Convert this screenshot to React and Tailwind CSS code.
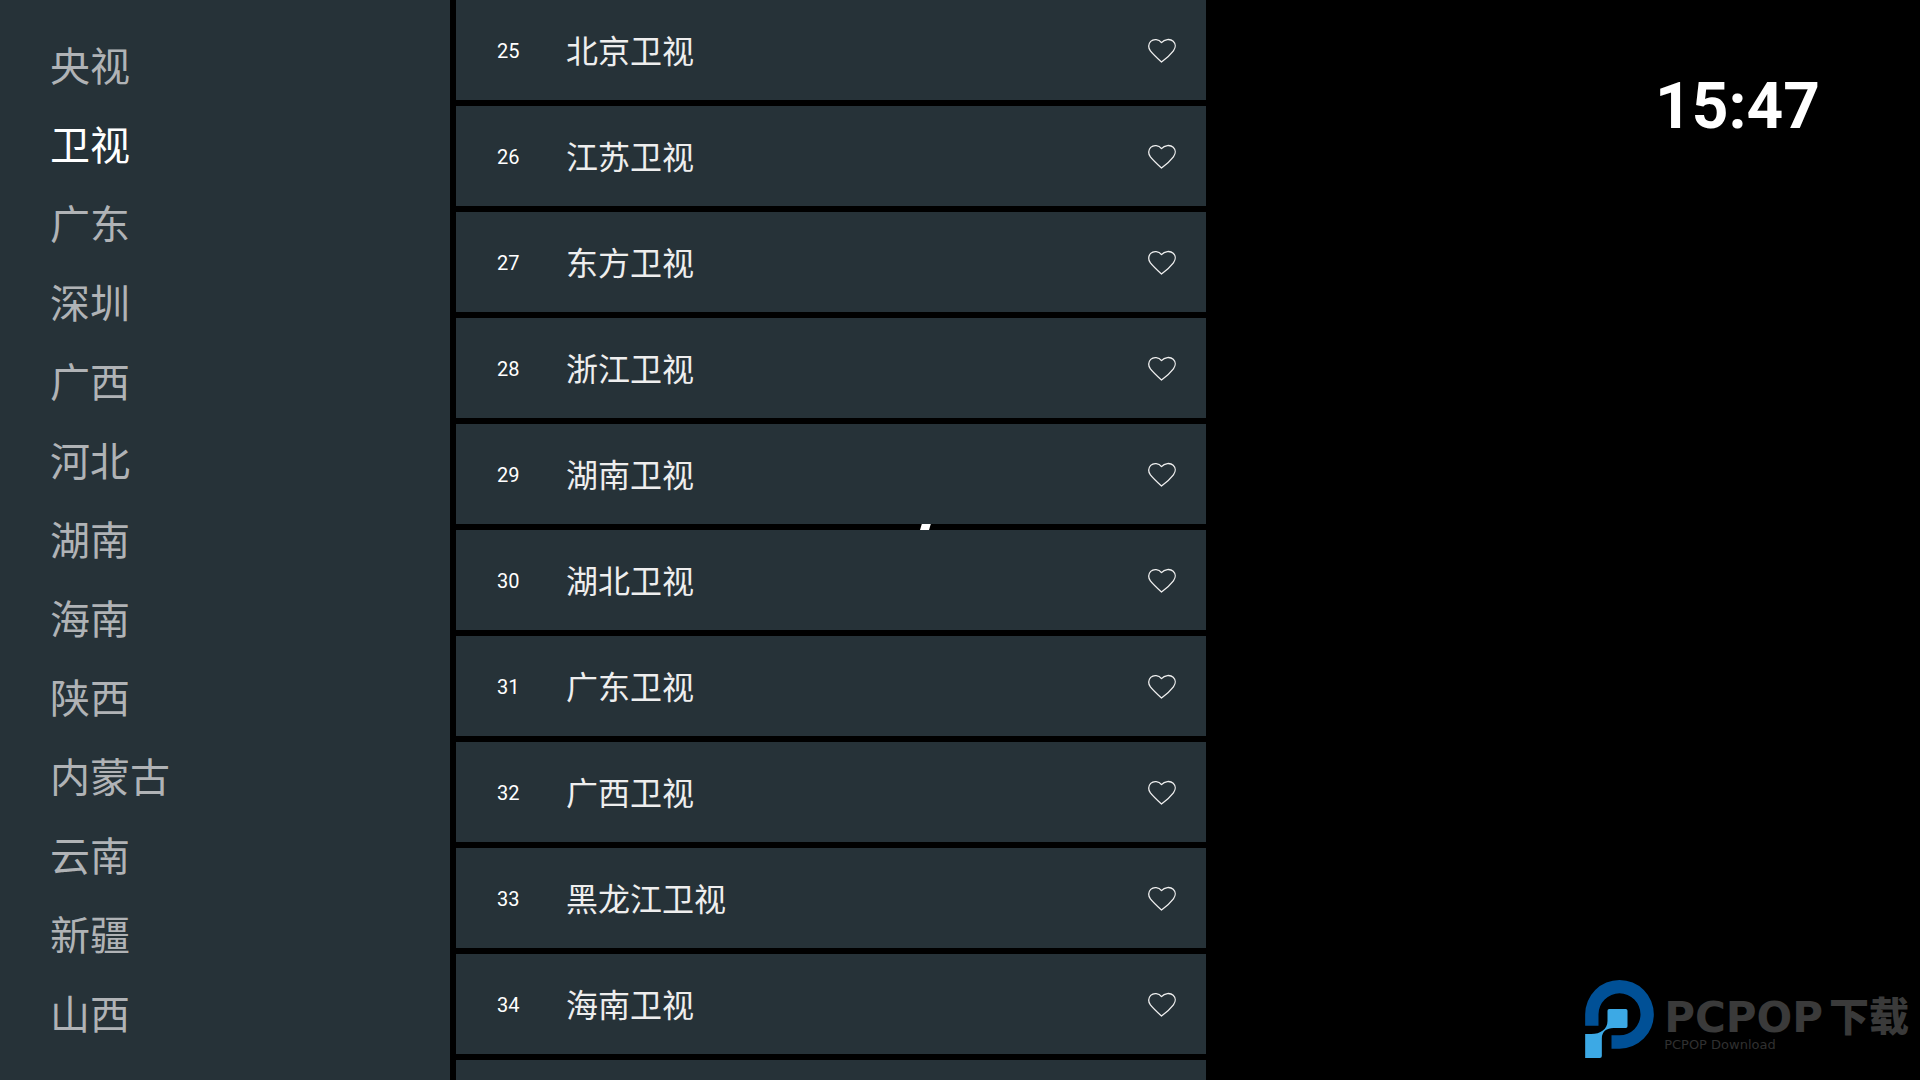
import { useState } from "react";

const groups = [
  "央视",
  "卫视",
  "广东",
  "深圳",
  "广西",
  "河北",
  "湖南",
  "海南",
  "陕西",
  "内蒙古",
  "云南",
  "新疆",
  "山西",
];

const channels = [
  { id: 25, name: "北京卫视" },
  { id: 26, name: "江苏卫视" },
  { id: 27, name: "东方卫视" },
  { id: 28, name: "浙江卫视" },
  { id: 29, name: "湖南卫视" },
  { id: 30, name: "湖北卫视" },
  { id: 31, name: "广东卫视" },
  { id: 32, name: "广西卫视" },
  { id: 33, name: "黑龙江卫视" },
  { id: 34, name: "海南卫视" },
];

const HeartIcon = ({ filled }) => (
  <svg width="28" height="25" viewBox="0 0 28 25" fill={filled ? "#f0f0f0" : "none"} stroke="#f0f0f0" strokeWidth="1.3" strokeLinejoin="round">
    <path d="M13.5 4.6C10.8 1 5.6 .6 2.7 3.4C-.1 6.2 .3 10.2 2.4 12.8C5.4 16.5 9.8 20.6 13.5 24C17.6 21 22.6 16.5 25.4 12.8C27.7 9.8 28 5.8 25.2 3.2C22.2 .6 16.6 1 13.5 4.6Z" />
  </svg>
);

const GroupList = ({ active, onSelect }) => (
  <nav className="w-[450px] shrink-0 bg-[#263238] pt-7">
    <ul>
      {groups.map((group) => (
        <li key={group}>
          <button
            type="button"
            className={`flex h-[79px] w-full items-center pl-[50px] text-[40px] leading-none ${group === active ? "text-white" : "text-[#b0b3b6]"}`}
            onClick={() => onSelect(group)}
          >
            {group}
          </button>
        </li>
      ))}
    </ul>
  </nav>
);

const ChannelRow = ({ channel, liked, onLike }) => (
  <li className="flex h-[100px] shrink-0 items-center bg-[#263238] pr-[30px]">
    <button type="button" className="flex h-full flex-1 items-center text-left">
      <span className="w-[110px] pt-px pl-[41px] text-xl text-white">{channel.id}</span>
      <span className="pt-1 text-[32px] leading-none text-[#eeeeee]">{channel.name}</span>
    </button>
    <button type="button" aria-label="收藏" aria-pressed={liked} onClick={() => onLike(channel.id)}>
      <HeartIcon filled={liked} />
    </button>
  </li>
);

const Brand = () => (
  <div className="flex items-start gap-[10px]">
    <svg width="69" height="78" viewBox="78 60 206 234">
      <path fill="#005096" d="M78 197V163A103 103 0 1 1 181 266H157V226H181A63 63 0 1 0 118 163V197Z" />
      <path
        fill="#3ca9e5"
        d="M150 147H200Q205 147 205 152V199Q205 204 200 204H163C143 204 128 214 128 236V288Q128 294 122 294H78V222H96C124 222 145 208 145 183V152Q145 147 150 147Z"
      />
    </svg>
    <div className="pt-5">
      <div className="flex items-center gap-[6px] text-[#3a3a3a]">
        <span className="font-['DejaVu_Sans'] text-[42px] leading-9 font-bold">PCPOP</span>
        <span className="text-[40px] leading-9 font-black">下载</span>
      </div>
      <p className="pt-px font-['DejaVu_Sans'] text-[13px] leading-4 text-[#303030]">PCPOP Download</p>
    </div>
  </div>
);

export default function App() {
  const [activeGroup, setActiveGroup] = useState("卫视");
  const [likes, setLikes] = useState([]);

  const toggleLike = (id) => {
    setLikes((prev) => (prev.includes(id) ? prev.filter((item) => item !== id) : [...prev, id]));
  };

  return (
    <main className="relative isolate flex h-screen gap-[6px] overflow-hidden bg-black font-[Roboto,'Noto_Sans_CJK_SC',sans-serif]">
      {/* Player spinner, visible only between the rows */}
      <svg className="absolute top-[524px] left-[920px] -z-10" width="11" height="6" viewBox="0 0 11 6">
        <path fill="#ffffff" d="M1.8 0H10.8L9 6H0Z" />
      </svg>

      <GroupList active={activeGroup} onSelect={setActiveGroup} />

      <ul className="flex w-[750px] shrink-0 flex-col gap-[6px]">
        {channels.map((channel) => (
          <ChannelRow key={channel.id} channel={channel} liked={likes.includes(channel.id)} onLike={toggleLike} />
        ))}
        <li className="flex-1 bg-[#263238]" aria-hidden="true" />
      </ul>

      <section className="flex flex-1 flex-col items-end justify-between pt-[75px] pb-[22px]">
        <time className="pr-[100px] text-[64px] leading-none font-bold text-white">15:47</time>
        <div className="pr-[11px]">
          <Brand />
        </div>
      </section>
    </main>
  );
}
